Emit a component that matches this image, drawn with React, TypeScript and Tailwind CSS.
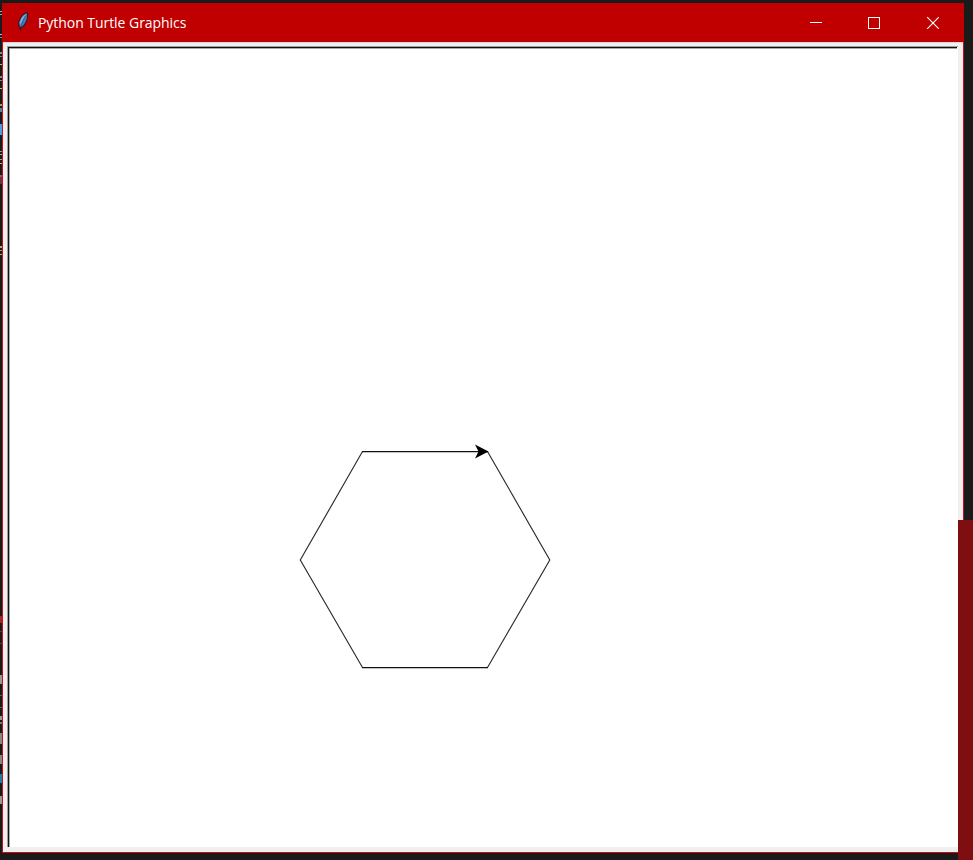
const fragments: [number, number, string][] = [
  [11, 1, "#aaa"], [14, 1, "#aaa"], [34, 1, "#bbb"], [37, 1, "#888"],
  [52, 2, "#888"], [56, 1, "#5a9aa0"], [64, 1, "#c8b860"], [76, 2, "#888"],
  [80, 1, "#5a9aa0"], [88, 1, "#c8b860"], [104, 2, "#b09a50"], [108, 4, "#4a88a8"],
  [124, 11, "#4aa0e8"], [151, 1, "#6aa0b0"], [154, 1, "#c8b060"], [159, 1, "#7ab0b0"],
  [163, 1, "#c8b060"], [175, 2, "#b0507a"], [177, 7, "#70304c"], [246, 2, "#c8a850"],
  [250, 1, "#6aa0b0"], [254, 1, "#c8b060"], [616, 7, "#a02828"], [631, 1, "#803030"],
  [643, 1, "#803030"], [675, 9, "#999"], [695, 1, "#207890"], [707, 1, "#207890"],
  [716, 4, "#999"], [722, 2, "#777"], [733, 11, "#888"], [755, 9, "#888"],
  [774, 9, "#1880a8"], [796, 8, "#999"],
];

function BackgroundEditor() {
  return (
    <svg className="absolute left-0 top-0" width="2" height="860" shapeRendering="crispEdges">
      {fragments.map(([y, h, color]) => (
        <rect key={y} x="0" y={y} width="2" height={h} fill={color} />
      ))}
    </svg>
  );
}

function Feather() {
  return (
    <svg className="ml-[15px] mt-[8px] shrink-0" width="13" height="22" viewBox="0 0 13 22">
      <path d="M10.7 1.2C7 1.4 3.6 5.2 1.8 9.6c-1 2.6-1 5 .5 7l1.2 4 1-3.7c3.6-1.4 5.5-5.3 6.2-9.6.4-2.1.5-4.4 0-6.1Z" fill="#33181e" />
      <path d="M10 2.2C6.3 3.2 3.6 7 2.3 11.4l.5 4.3 1.4.3C7.4 13.6 9.2 10.7 9.8 7.2Z" fill="#3f7cc6" />
      <path d="M9.3 2.8C6 4.2 3.7 7.8 2.7 11.5l.2 3C5 11 7.3 7 9.3 2.8Z" fill="#86abd0" />
      <path d="M8.3 5C6.4 8.5 4.9 12 3.5 16.5" fill="none" stroke="#28344c" strokeWidth=".5" />
    </svg>
  );
}

function TitleBar() {
  return (
    <header className="flex h-[39px] shrink-0 items-start bg-[#c00000] text-white">
      <Feather />
      <h1 className="ml-[8px] mt-[10px] whitespace-nowrap font-['Open_Sans','Noto_Sans',sans-serif] text-[14px] leading-5 font-normal tracking-[-0.05px]">
        Python Turtle Graphics
      </h1>
      <div className="ml-auto mt-[13px] mr-[25px] flex gap-[46px]">
        <svg width="13" height="13" shapeRendering="crispEdges">
          <rect x="1" y="6" width="12" height="1" fill="white" />
        </svg>
        <svg width="12" height="13" shapeRendering="crispEdges">
          <rect x=".5" y="1.5" width="11" height="11" fill="none" stroke="white" />
        </svg>
        <svg width="13" height="13">
          <path d="M1.2 1.2 12.8 12.8M12.8 1.2 1.2 12.8" fill="none" stroke="white" strokeWidth="1.1" />
        </svg>
      </div>
    </header>
  );
}

function TurtleCanvas() {
  return (
    <main className="min-h-0 flex-1 border-x border-b border-x-[#d00c10] border-b-[#d00c10] bg-[#f0f0f0]">
      <div className="flex h-full border-t border-t-[#d5d5d5] pt-[3px] pr-[5px] pb-[5px] pl-[4px]">
        <div className="flex flex-1 border-t border-l border-[#a0a0a0]">
          <div className="flex flex-1 border-r border-r-white bg-white">
            <div className="flex flex-1 border-t border-l border-[#101010]">
              <div className="flex-1 border-t border-l border-t-[#a8a8a8] border-l-[#a8a8a8] bg-white">
                <svg width="947" height="798" viewBox="10 49 947 798">
                  <path d="M362.5 451.5 300.3 560 362.5 667.5M487.5 667.5 549.8 560 487.5 451.5" fill="none" stroke="#2c2c2c" strokeWidth="1.15" />
                  <path d="M362 451.5H488M362 667.5H488" stroke="#101010" strokeWidth="1.25" />
                  <path d="M488.5 451.5 475 444.5 478.5 451.5 475 458.5Z" fill="black" />
                </svg>
              </div>
            </div>
          </div>
        </div>
      </div>
    </main>
  );
}

export default function App() {
  return (
    <div className="relative h-[860px] w-[973px] overflow-hidden bg-[#1a1a1a] pt-[3px] pl-[2px]">
      <BackgroundEditor />
      <section className="flex h-[850px] w-[962px] flex-col">
        <TitleBar />
        <TurtleCanvas />
      </section>
      <div className="absolute top-[520px] left-[958px] h-[340px] w-[15px] bg-[#7e0e10]" />
    </div>
  );
}
